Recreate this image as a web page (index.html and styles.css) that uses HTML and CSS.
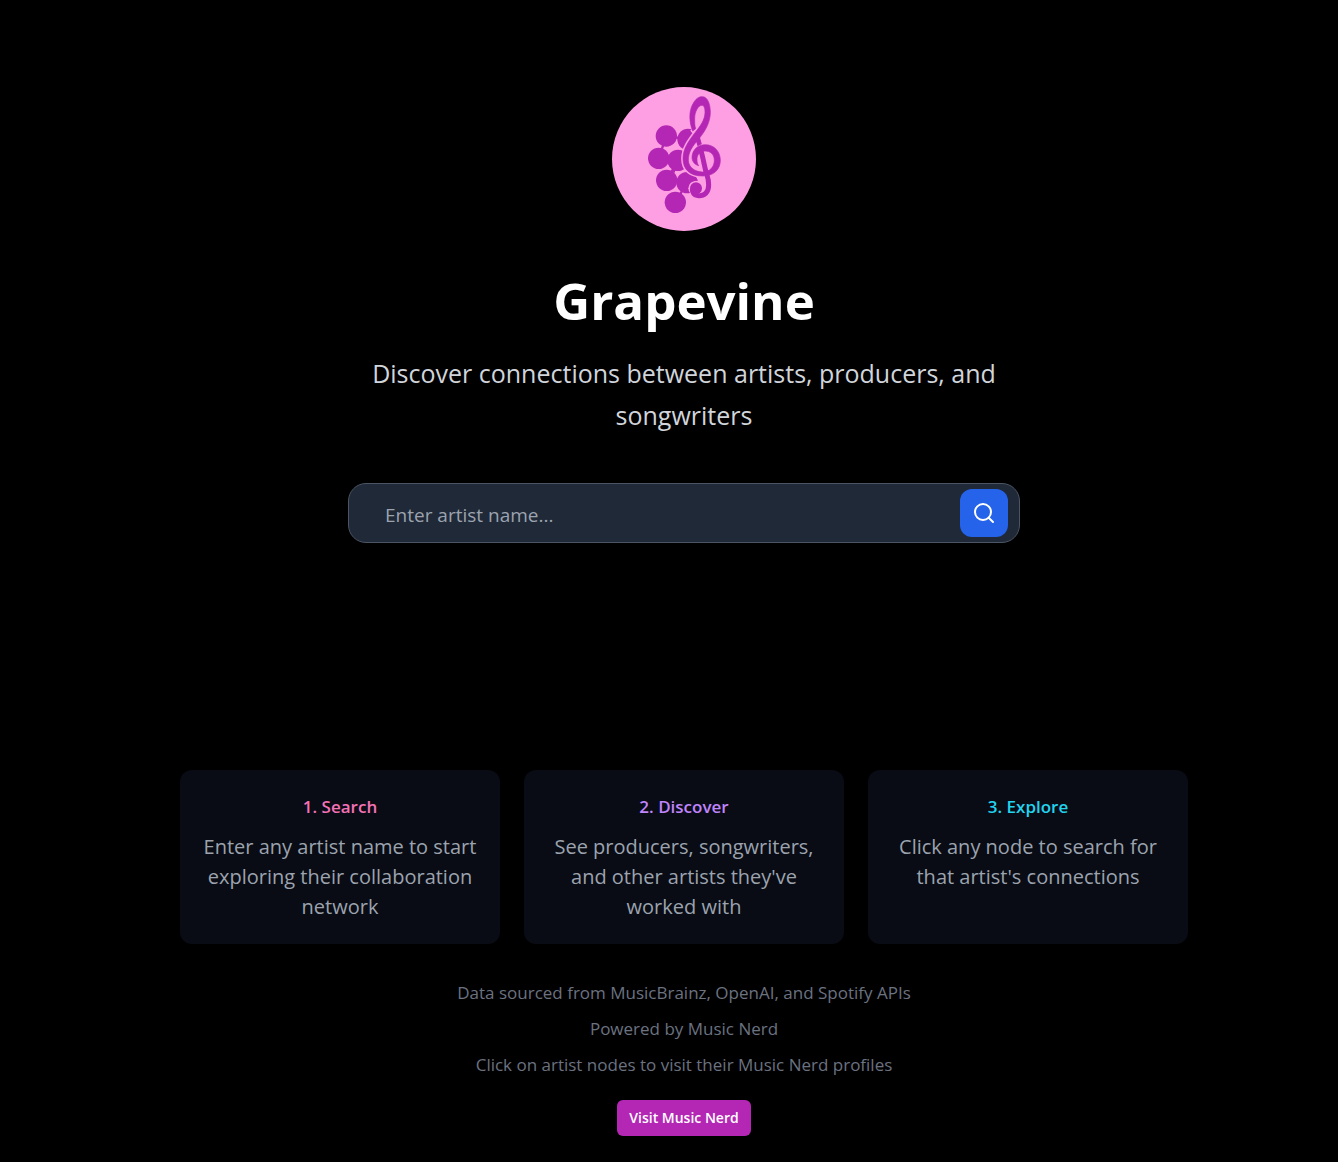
FILE: index.html
```html
<!DOCTYPE html>
<html lang="en">
<head>
<meta charset="utf-8">
<meta name="viewport" content="width=device-width, initial-scale=1">
<title>Grapevine</title>
<link rel="stylesheet" href="styles.css">
</head>
<body>
<main class="page">
  <header class="hero">
    <svg class="logo" viewBox="24 21 432 432" role="img" aria-label="Grapevine logo">
      <circle cx="240" cy="237" r="216" fill="#ff9fe3"/>
      <g fill="#b427b4">
        <path d="M187 168L252 178M187 168L164 235M164 235H222M222 241L188 301M222 241L208 278M188 301L249 308L214 367" fill="none" stroke="#b427b4" stroke-width="7"/>
        <circle cx="187" cy="168" r="32"/>
        <circle cx="252" cy="178" r="32"/>
        <circle cx="164" cy="235" r="32"/>
        <circle cx="222" cy="241" r="32"/>
        <circle cx="188" cy="301" r="32"/>
        <circle cx="249" cy="308" r="32"/>
        <circle cx="214" cy="367" r="32"/>
      </g>
      <path d="M263 148L285 176C264 200 253 216 253 241C254 262 272 275 295 276L297 288C258 288 237 268 237 236C237 205 255 182 273 158Z" fill="#ff9fe3" stroke="#ff9fe3" stroke-width="11"/>
      <circle cx="297" cy="241" r="53" fill="#ff9fe3"/>
      <circle cx="276" cy="325" r="23" fill="#ff9fe3"/>
      <path d="M282 290H330V330H282Z" fill="#ff9fe3"/>
      <path d="M276 176L282 196L291 191L285 170Z" fill="#b427b4" stroke="#b427b4" stroke-width="4"/>
      <path d="M249 285Q275 289 282 301L260 306Z" fill="#b427b4"/>
      <path d="M266 153C255 125 255 95 265 75C275 55 284 50 295 50C312 50 319 75 319 97C319 125 305 152 285 176C264 200 253 216 253 241C254 262 272 275 295 276C318 276 331 260 331 241C331 222 318 213 303 213C285 213 278 228 279 240C279 248 281 252 284 257C270 254 264 242 264 232C265 210 280 194 304 194C330 194 349 214 349 241C349 268 330 288 296 288C258 288 237 268 237 236C237 205 255 182 273 158C290 138 303 118 303 97C303 85 300 76 294 76C283 76 272 95 272 115C272 130 272 138 275 146Z" fill="#b427b4" stroke="#b427b4" stroke-width="2"/>
      <path d="M291 212C299 240 302 265 309 285Q314 300 314 315C314 338 300 348 284 347C268 346 265 335 265 328" fill="none" stroke="#b427b4" stroke-width="15"/>
      <circle cx="276" cy="325" r="18" fill="#b427b4"/>
    </svg>
    <h1 class="title">Grapevine</h1>
    <p class="tagline">Discover connections between artists, producers, and songwriters</p>
    <form class="search">
      <input class="search-input" type="text" placeholder="Enter artist name..." aria-label="Artist name">
      <button class="search-button" type="button" aria-label="Search">
        <svg class="search-icon" viewBox="0 0 24 24" fill="none" stroke="currentColor" stroke-width="2" stroke-linecap="round" stroke-linejoin="round"><circle cx="11" cy="11" r="8"/><path d="m21 21-4.3-4.3"/></svg>
      </button>
    </form>
  </header>
  <section class="steps">
    <article class="card">
      <h2 class="card-title pink">1. Search</h2>
      <p class="card-text">Enter any artist name to start exploring their collaboration network</p>
    </article>
    <article class="card">
      <h2 class="card-title purple">2. Discover</h2>
      <p class="card-text">See producers, songwriters, and other artists they've worked with</p>
    </article>
    <article class="card">
      <h2 class="card-title cyan">3. Explore</h2>
      <p class="card-text">Click any node to search for that artist's connections</p>
    </article>
  </section>
  <footer class="footer">
    <p>Data sourced from MusicBrainz, OpenAI, and Spotify APIs</p>
    <p>Powered by Music Nerd</p>
    <p>Click on artist nodes to visit their Music Nerd profiles</p>
    <button class="visit" type="button">Visit Music Nerd</button>
  </footer>
</main>
</body>
</html>
```
FILE: styles.css
```css
* { box-sizing: border-box; margin: 0; }
body {
  background: #000;
  color: #fff;
  font-family: "Open Sans", "Noto Sans", sans-serif;
}
.page {
  display: flex;
  flex-direction: column;
  align-items: center;
  padding: 87px 0 26px 30px;
  text-align: center;
}
.hero {
  display: flex;
  flex-direction: column;
  align-items: center;
  width: 100%;
  max-width: 672px;
}
.logo { width: 144px; height: 144px; }
.title {
  margin-top: 36px;
  font-size: 51px;
  line-height: 66px;
  font-weight: 700;
}
.tagline {
  margin-top: 19px;
  font-size: 25px;
  line-height: 42px;
  color: #d1d5db;
}
.search {
  display: flex;
  align-items: center;
  width: 100%;
  height: 60px;
  margin-top: 47px;
  padding: 0 11px 0 36px;
  background: #1f2937;
  border: 1px solid #4b5563;
  border-radius: 18px;
}
.search-input {
  flex: 1;
  min-width: 0;
  padding: 3px 0 0;
  border: 0;
  outline: 0;
  background: transparent;
  color: #fff;
  font: 19px/30px "Open Sans", "Noto Sans", sans-serif;
}
.search-input::placeholder { color: #9ca3af; opacity: 1; }
.search-button {
  display: flex;
  align-items: center;
  justify-content: center;
  width: 48px;
  height: 48px;
  padding: 0;
  border: 0;
  border-radius: 12px;
  background: #2563eb;
  color: #fff;
}
.search-icon { width: 24px; height: 24px; }
.steps {
  display: grid;
  grid-template-columns: repeat(3, 1fr);
  gap: 24px;
  width: 100%;
  max-width: 1008px;
  margin-top: 227px;
}
.card {
  padding: 25px 20px 22px;
  border-radius: 12px;
  background: #090c14;
}
.card-title {
  margin-bottom: 13px;
  font-size: 17px;
  line-height: 24px;
  font-weight: 600;
}
.pink { color: #f472b6; }
.purple { color: #c084fc; }
.cyan { color: #22d3ee; }
.card-text {
  font-size: 20px;
  line-height: 30px;
  color: #9ca3af;
}
.footer {
  display: flex;
  flex-direction: column;
  align-items: center;
  gap: 12px;
  margin-top: 37px;
  font-size: 17px;
  line-height: 24px;
  color: #6b7280;
}
.visit {
  height: 36px;
  margin-top: 11px;
  padding: 0 12px;
  border: 0;
  border-radius: 6px;
  background: #b427b4;
  color: #fff;
  font: 600 14px/20px "Open Sans", "Noto Sans", sans-serif;
}
```
